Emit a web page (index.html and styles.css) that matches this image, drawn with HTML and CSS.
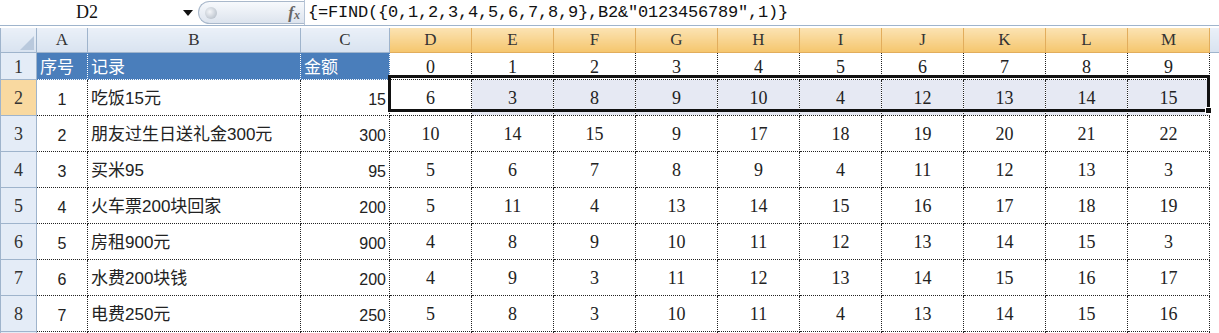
FILE: index.html
```html
<!DOCTYPE html>
<html>
<head>
    <title>FIND</title>
    <link rel="stylesheet" href="styles.css">
</head>
<body>
    <div class="formula-bar">
        <div class="name-box">
            <span class="cell-name">D2</span>
            <span class="drop-arrow"></span>
        </div>
        <div class="fx-pill">
            <span class="knob"></span>
            <span class="fx">f<sub>x</sub></span>
        </div>
        <div class="formula">{=FIND({0,1,2,3,4,5,6,7,8,9},B2&amp;"0123456789",1)}</div>
    </div>

    <div class="sheet">
        <table class="grid">
            <colgroup>
                <col class="w-head">
                <col class="w-a">
                <col class="w-b">
                <col class="w-c">
                <col class="w-n"><col class="w-n"><col class="w-n"><col class="w-n"><col class="w-n">
                <col class="w-n"><col class="w-n"><col class="w-n"><col class="w-n"><col class="w-n">
                <col class="w-rest">
            </colgroup>
            <tr class="col-heads">
                <th class="corner">
                    <svg width="14" height="14" viewBox="0 0 14 14"><polygon points="14,0 14,14 0,14" fill="#b9c9dd"/></svg>
                </th>
                <th>A</th><th>B</th><th>C</th>
                <th class="on">D</th><th class="on">E</th><th class="on">F</th><th class="on">G</th><th class="on">H</th>
                <th class="on">I</th><th class="on">J</th><th class="on">K</th><th class="on">L</th><th class="on">M</th>
                <th class="rest"></th>
            </tr>
            <tr class="short">
                <th class="row-head">1</th>
                <td class="title">序号</td><td class="title">记录</td><td class="title">金额</td>
                <td class="n">0</td><td class="n">1</td><td class="n">2</td><td class="n">3</td><td class="n">4</td>
                <td class="n">5</td><td class="n">6</td><td class="n">7</td><td class="n">8</td><td class="n">9</td>
                <td class="rest"></td>
            </tr>
            <tr>
                <th class="row-head on">2</th>
                <td class="idx">1</td><td class="text">吃饭15元</td><td class="amt">15</td>
                <td class="n">6</td><td class="n picked">3</td><td class="n picked">8</td><td class="n picked">9</td><td class="n picked">10</td>
                <td class="n picked">4</td><td class="n picked">12</td><td class="n picked">13</td><td class="n picked">14</td><td class="n picked">15</td>
                <td class="rest"></td>
            </tr>
            <tr>
                <th class="row-head">3</th>
                <td class="idx">2</td><td class="text">朋友过生日送礼金300元</td><td class="amt">300</td>
                <td class="n">10</td><td class="n">14</td><td class="n">15</td><td class="n">9</td><td class="n">17</td>
                <td class="n">18</td><td class="n">19</td><td class="n">20</td><td class="n">21</td><td class="n">22</td>
                <td class="rest"></td>
            </tr>
            <tr>
                <th class="row-head">4</th>
                <td class="idx">3</td><td class="text">买米95</td><td class="amt">95</td>
                <td class="n">5</td><td class="n">6</td><td class="n">7</td><td class="n">8</td><td class="n">9</td>
                <td class="n">4</td><td class="n">11</td><td class="n">12</td><td class="n">13</td><td class="n">3</td>
                <td class="rest"></td>
            </tr>
            <tr>
                <th class="row-head">5</th>
                <td class="idx">4</td><td class="text">火车票200块回家</td><td class="amt">200</td>
                <td class="n">5</td><td class="n">11</td><td class="n">4</td><td class="n">13</td><td class="n">14</td>
                <td class="n">15</td><td class="n">16</td><td class="n">17</td><td class="n">18</td><td class="n">19</td>
                <td class="rest"></td>
            </tr>
            <tr>
                <th class="row-head">6</th>
                <td class="idx">5</td><td class="text">房租900元</td><td class="amt">900</td>
                <td class="n">4</td><td class="n">8</td><td class="n">9</td><td class="n">10</td><td class="n">11</td>
                <td class="n">12</td><td class="n">13</td><td class="n">14</td><td class="n">15</td><td class="n">3</td>
                <td class="rest"></td>
            </tr>
            <tr>
                <th class="row-head">7</th>
                <td class="idx">6</td><td class="text">水费200块钱</td><td class="amt">200</td>
                <td class="n">4</td><td class="n">9</td><td class="n">3</td><td class="n">11</td><td class="n">12</td>
                <td class="n">13</td><td class="n">14</td><td class="n">15</td><td class="n">16</td><td class="n">17</td>
                <td class="rest"></td>
            </tr>
            <tr>
                <th class="row-head">8</th>
                <td class="idx">7</td><td class="text">电费250元</td><td class="amt">250</td>
                <td class="n">5</td><td class="n">8</td><td class="n">3</td><td class="n">10</td><td class="n">11</td>
                <td class="n">4</td><td class="n">13</td><td class="n">14</td><td class="n">15</td><td class="n">16</td>
                <td class="rest"></td>
            </tr>
            <tr>
                <th class="row-head"></th>
                <td></td><td></td><td></td>
                <td></td><td></td><td></td><td></td><td></td>
                <td></td><td></td><td></td><td></td><td></td>
                <td class="rest"></td>
            </tr>
        </table>
        <div class="selection"><span class="fill-handle"></span></div>
    </div>
</body>
</html>
```

FILE: styles.css
```css
body {
    margin: 0;
    background-color: #fff;
    font-family: "Liberation Sans", "Noto Sans CJK SC", sans-serif;
    overflow: hidden;
}

/* formula bar */

.formula-bar {
    display: flex;
    height: 25px;
    border-bottom: 1px solid #9fb4cc;
    margin-bottom: 2px;
}

.name-box {
    width: 198px;
    display: flex;
    align-items: center;
    position: relative;
}

.cell-name {
    width: 174px;
    text-align: center;
    font-family: "Liberation Serif", serif;
    font-size: 18px;
    color: #111;
}

.drop-arrow {
    width: 0;
    height: 0;
    border-left: 5px solid transparent;
    border-right: 5px solid transparent;
    border-top: 6px solid #111;
    margin-left: 9px;
}

.fx-pill {
    width: 106px;
    height: 23px;
    margin-top: 1px;
    box-sizing: border-box;
    border: 1px solid #a9b8cb;
    border-right: none;
    border-radius: 12px 0 0 12px;
    background: linear-gradient(to bottom, #f7f9fc, #dde4ee);
    display: flex;
    align-items: center;
    justify-content: space-between;
    padding: 0 4px 0 6px;
}

.knob {
    width: 12px;
    height: 12px;
    border-radius: 50%;
    background: radial-gradient(circle at 40% 40%, #f4f6f9, #a9b3bf);
}

.fx {
    font-family: "Liberation Serif", serif;
    font-style: italic;
    font-weight: bold;
    font-size: 17px;
    color: #666;
}

.fx sub {
    font-size: 12px;
    vertical-align: -1px;
}

.formula {
    flex: 1;
    border-left: 1px solid #b6c4d6;
    padding-left: 3px;
    font-family: "Liberation Mono", monospace;
    font-size: 17px;
    letter-spacing: -0.2px;
    line-height: 25px;
    color: #111;
    white-space: nowrap;
}

/* sheet */

.sheet {
    position: relative;
}

.grid {
    border-collapse: collapse;
    table-layout: fixed;
    width: 1219px;
}

.w-head { width: 36px; }
.w-a { width: 51px; }
.w-b { width: 213px; }
.w-c { width: 89px; }
.w-n { width: 82px; }
.w-rest { width: 10px; }

.grid th,
.grid td {
    padding: 0;
    height: 36px;
    box-sizing: border-box;
    border: 1px dotted #222;
    white-space: nowrap;
    overflow: hidden;
    vertical-align: bottom;
    padding-bottom: 6px;
    font-weight: normal;
}

.col-heads th {
    height: 24px;
    padding-bottom: 0;
    vertical-align: middle;
    background: linear-gradient(to bottom, #eaf0f8, #d9e3f0);
    border: 1px solid #9fb4cc;
    border-top: none;
    font-family: "Liberation Serif", serif;
    font-size: 17px;
    color: #333;
}

.col-heads th.on {
    background: linear-gradient(to bottom, #fbe3b3, #f5c66e);
    border-left-color: #e2ad5c;
    border-right-color: #e2ad5c;
    border-bottom-color: #e2ad5c;
}

.col-heads .corner {
    text-align: right;
    vertical-align: bottom;
    padding: 0 2px 2px 0;
    line-height: 0;
}

.col-heads .rest {
    border-right: none;
}

.short th,
.short td {
    height: 24px;
    padding-bottom: 1px;
}

.row-head {
    background-color: #e4ecf7;
    border: 1px solid #9fb4cc !important;
    border-top-color: #c5d3e3 !important;
    font-family: "Liberation Serif", serif;
    font-size: 18px;
    color: #333;
    text-align: center;
}

.row-head.on {
    background-color: #f9d9a0;
}

.title {
    background-color: #4a7ebb;
    color: #fff;
    font-weight: bold;
    font-size: 17px;
    padding-left: 3px !important;
    border-color: #4a7ebb !important;
}

.idx {
    text-align: center;
    font-size: 16px;
    color: #222;
}

.text {
    font-size: 17px;
    color: #222;
    padding-left: 3px !important;
}

.amt {
    text-align: right;
    font-size: 16px;
    color: #222;
    padding-right: 3px !important;
}

.n {
    text-align: center;
    font-family: "Liberation Serif", serif;
    font-size: 18px;
    color: #222;
}

.picked {
    background-color: #e6e9f3;
}

.grid td.rest {
    border: none;
    background-color: #fff;
}

.col-heads th.rest {
    background: linear-gradient(to bottom, #eaf0f8, #d9e3f0);
}

/* selected range D2:M2 */

.selection {
    position: absolute;
    left: 388px;
    top: 47px;
    width: 822px;
    height: 37px;
    box-sizing: border-box;
    border: 3px solid #111;
    pointer-events: none;
}

.fill-handle {
    position: absolute;
    right: -5px;
    bottom: -5px;
    width: 5px;
    height: 5px;
    background-color: #111;
    border: 1px solid #fff;
}
```
